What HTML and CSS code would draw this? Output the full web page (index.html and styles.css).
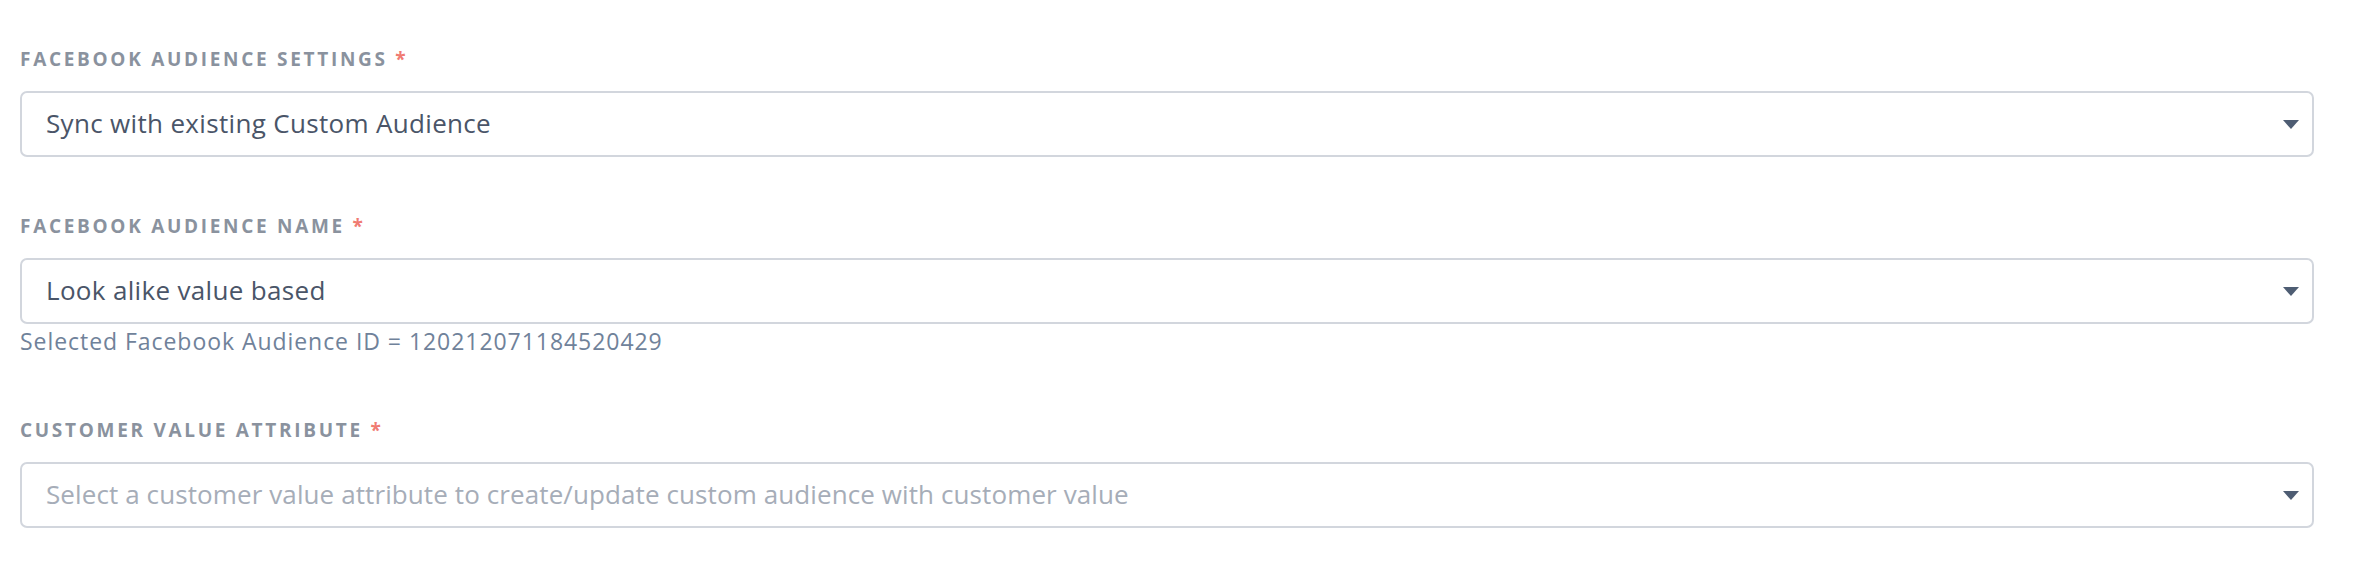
FILE: index.html
```html
<!DOCTYPE html>
<html lang="en">
<head>
<meta charset="utf-8">
<title>Facebook Audience</title>
<link rel="stylesheet" href="styles.css">
</head>
<body>
<form class="form">
  <div class="field">
    <label class="label">Facebook Audience Settings <span class="req">*</span></label>
    <div class="select">
      <span class="value">Sync with existing Custom Audience</span>
      <svg class="caret" viewBox="0 0 16 9" width="16" height="9"><path d="M0 0H16L8 9Z"/></svg>
    </div>
  </div>
  <div class="field">
    <label class="label">Facebook Audience Name <span class="req">*</span></label>
    <div class="select">
      <span class="value">Look alike value based</span>
      <svg class="caret" viewBox="0 0 16 9" width="16" height="9"><path d="M0 0H16L8 9Z"/></svg>
    </div>
    <div class="help">Selected Facebook Audience ID = 120212071184520429</div>
  </div>
  <div class="field">
    <label class="label">Customer Value Attribute <span class="req">*</span></label>
    <div class="select">
      <span class="value placeholder">Select a customer value attribute to create/update custom audience with customer value</span>
      <svg class="caret" viewBox="0 0 16 9" width="16" height="9"><path d="M0 0H16L8 9Z"/></svg>
    </div>
  </div>
</form>
</body>
</html>
```
FILE: styles.css
```css
html, body {
  margin: 0;
  background: #ffffff;
}
body {
  font-family: "Open Sans", Lato, sans-serif;
  color: #4a5568;
}
.form {
  display: flex;
  flex-direction: column;
  gap: 57px;
  padding: 47px 48px 0 20px;
}
.field {
  display: flex;
  flex-direction: column;
}
.label {
  font-size: 19px;
  line-height: 24px;
  font-weight: 700;
  letter-spacing: 2.7px;
  text-transform: uppercase;
  color: #8a929e;
  margin-bottom: 20px;
}
.req {
  color: #f07b72;
  letter-spacing: 0;
}
.select {
  box-sizing: border-box;
  height: 66px;
  border: 2px solid #d2d6dd;
  border-radius: 7px;
  display: flex;
  align-items: center;
  justify-content: space-between;
  padding: 0 13px 3px 24px;
}
.value {
  font-size: 26px;
  line-height: 34px;
  letter-spacing: 0.33px;
  color: #4a5568;
}
.value.placeholder {
  color: #a6adb8;
  letter-spacing: 0.1px;
}
.caret {
  fill: #4e5d73;
  margin-top: 3px;
}
.help {
  margin-top: 2px;
  margin-bottom: 5px;
  font-size: 23px;
  line-height: 30px;
  letter-spacing: 0.95px;
  color: #70829a;
}
```
